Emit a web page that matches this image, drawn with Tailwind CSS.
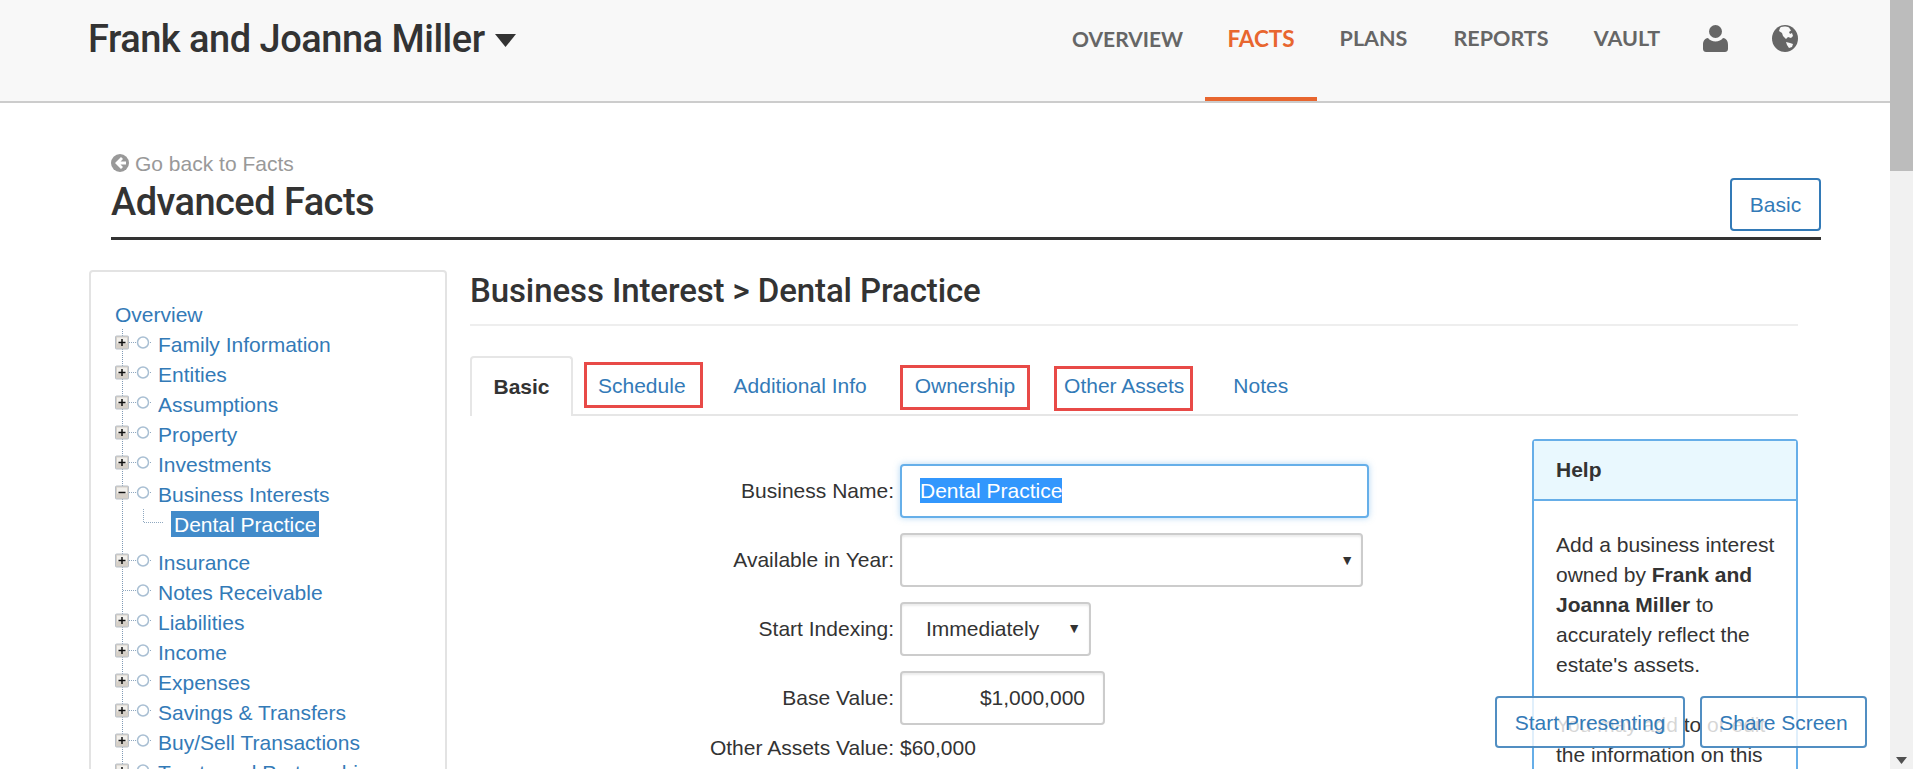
<!DOCTYPE html>
<html lang="en">

<head>
    <meta charset="UTF-8">
    <title>Advanced Facts</title>
    <script src="https://cdn.jsdelivr.net/npm/@tailwindcss/browser@4"></script>
</head>

<body class="h-[769px] overflow-hidden bg-white font-['Liberation_Sans',Arial,sans-serif] text-[21px] leading-[25px] text-[#333]">
    <svg class="hidden">
        <symbol id="tree-plus" viewBox="0 0 43 30">
            <path d="M7.5 0V30" stroke="#7f9ab5" stroke-dasharray="1 1" fill="none" />
            <path d="M14 13.5H21M35 13.5H37" stroke="#8fa8c0" stroke-dasharray="1 1" fill="none" />
            <rect x="0.5" y="7" width="13" height="13" rx="1" fill="#d6d0c8" stroke="#b9c0c8" />
            <rect x="2" y="8.5" width="10" height="6" fill="#f2f0ec" />
            <path d="M3.5 13.5H10.5M7 10V17" stroke="#111" stroke-width="1.5" />
            <circle cx="28" cy="13.500" r="5.500" fill="#fff" stroke="#a9bfd3" stroke-width="1.500" />
        </symbol>
        <symbol id="tree-minus" viewBox="0 0 43 30">
            <path d="M7.5 0V30" stroke="#7f9ab5" stroke-dasharray="1 1" fill="none" />
            <path d="M14 13.5H21M35 13.5H37" stroke="#8fa8c0" stroke-dasharray="1 1" fill="none" />
            <rect x="0.5" y="7" width="13" height="13" rx="1" fill="#d6d0c8" stroke="#b9c0c8" />
            <rect x="2" y="8.5" width="10" height="6" fill="#f2f0ec" />
            <path d="M3.5 13.5H10.5" stroke="#111" stroke-width="1.5" />
            <circle cx="28" cy="13.500" r="5.500" fill="#fff" stroke="#a9bfd3" stroke-width="1.500" />
        </symbol>
        <symbol id="tree-leaf" viewBox="0 0 43 30">
            <path d="M7.5 0V30" stroke="#7f9ab5" stroke-dasharray="1 1" fill="none" />
            <path d="M8 13.5H21M35 13.5H37" stroke="#8fa8c0" stroke-dasharray="1 1" fill="none" />
            <circle cx="28" cy="13.500" r="5.500" fill="#fff" stroke="#a9bfd3" stroke-width="1.500" />
        </symbol>
    </svg>

    <div class="flex h-[769px]">
        <div class="relative w-[1890px] overflow-hidden">
            <!-- top nav -->
            <header class="flex h-[103px] justify-between border-b-2 border-[#ccc] bg-[#f8f8f8] pl-[88px] pr-[92px]">
                <div class="flex h-[78px] items-center font-['Roboto',sans-serif] text-[38px] font-medium tracking-[-0.5px] text-[#333]">
                    Frank and Joanna Miller
                    <svg class="ml-[10px] mt-[2px] h-[13px] w-[21px]" viewBox="0 0 21 13"><path d="M0 0H21L10.500 13z" fill="#333" /></svg>
                </div>
                <nav class="flex font-['Lato',sans-serif] text-[21.5px] font-bold text-[#666]">
                    <a class="w-[133px] pr-[23px] pt-[26px] text-right text-[21px]">OVERVIEW</a>
                    <a class="h-[101px] w-[112px] border-b-4 border-[#e8662f] pt-[26px] text-center text-[22.5px] text-[#e8662f]">FACTS</a>
                    <a class="w-[113px] pt-[26px] text-center">PLANS</a>
                    <a class="w-[142px] pt-[26px] text-center">REPORTS</a>
                    <a class="w-[110px] pt-[26px] text-center">VAULT</a>
                    <svg class="ml-[21px] mt-[25px] h-[27px] w-[25px]" viewBox="0 0 25 27">
                        <ellipse cx="12.500" cy="6.500" rx="6.500" ry="6.500" fill="#666" />
                        <path d="M0 20c0-4 1.500-6.500 5-7 1.500 2 4.500 3.500 7.500 3.500s6-1.500 7.500-3.500c3.500.5 5 3 5 7v4c0 2-1.500 3-3 3H3c-1.500 0-3-1-3-3z" fill="#666" />
                    </svg>
                    <svg class="ml-[44px] mt-[25px] h-[27px] w-[26px]" viewBox="0 0 26 27">
                        <ellipse cx="13" cy="13.500" rx="13" ry="13.500" fill="#666" />
                        <path d="M9 2c3-1 6-.500 8 .500l2 3-2 1.500 1 2 2-1 1 3-2 2-3-1-2 2-3-3-1-3-3-2 1-3zM14 17l4 1 3 1-1 3-3 1-2-3z" fill="#f8f8f8" />
                    </svg>
                </nav>
            </header>

            <!-- page heading -->
            <div class="ml-[111px] mr-[69px] mt-[48px] flex items-end justify-between border-b-[3px] border-[#333]">
                <div class="pb-[12px]">
                    <a class="mb-[4px] flex h-[24px] items-center text-[#999]">
                        <svg class="mr-[6px] h-[18px] w-[18px] shrink-0" viewBox="0 0 18 18">
                            <circle cx="9" cy="9" r="9" fill="#999" />
                            <path d="M10 3 4 9l6 6 2-2-2.500-2.500H15v-3H9.500L12 5z" fill="#fff" />
                        </svg>
                        Go back to Facts
                    </a>
                    <h1 class="h-[46px] font-['Roboto',sans-serif] text-[38px] font-medium leading-[46px] tracking-[-0.55px]">Advanced Facts</h1>
                </div>
                <button class="mb-[6px] h-[53px] w-[91px] rounded-[4px] border-2 border-[#337ab7] text-[#337ab7]">Basic</button>
            </div>

            <div class="ml-[89px] mt-[31px] flex gap-[23px]">
                <!-- facts tree -->
                <aside class="-mt-[1px] h-[600px] w-[358px] shrink-0 rounded-[4px] border-2 border-[#e3e3e3] pl-[24px] pt-[27px] text-[#337ab7]">
                    <div class="flex h-[30px] items-center">Overview</div>
                    <div class="flex h-[30px] items-center"><svg class="h-[30px] w-[43px]"><use href="#tree-plus" /></svg>Family Information</div>
                    <div class="flex h-[30px] items-center"><svg class="h-[30px] w-[43px]"><use href="#tree-plus" /></svg>Entities</div>
                    <div class="flex h-[30px] items-center"><svg class="h-[30px] w-[43px]"><use href="#tree-plus" /></svg>Assumptions</div>
                    <div class="flex h-[30px] items-center"><svg class="h-[30px] w-[43px]"><use href="#tree-plus" /></svg>Property</div>
                    <div class="flex h-[30px] items-center"><svg class="h-[30px] w-[43px]"><use href="#tree-plus" /></svg>Investments</div>
                    <div class="flex h-[30px] items-center"><svg class="h-[30px] w-[43px]"><use href="#tree-minus" /></svg>Business Interests</div>
                    <div class="flex h-[38px] items-start">
                        <svg class="h-[38px] w-[56px] shrink-0" viewBox="0 0 56 38">
                            <path d="M7.500 0V38" stroke="#7f9ab5" stroke-dasharray="1 1" fill="none" />
                            <path d="M28.500 0V13.500H48" stroke="#8fa8c0" stroke-dasharray="1 1" fill="none" />
                        </svg>
                        <span class="mt-[2px] flex h-[26px] items-center bg-[#428bca] px-[3px] text-white">Dental Practice</span>
                    </div>
                    <div class="flex h-[30px] items-center"><svg class="h-[30px] w-[43px]"><use href="#tree-plus" /></svg>Insurance</div>
                    <div class="flex h-[30px] items-center"><svg class="h-[30px] w-[43px]"><use href="#tree-leaf" /></svg>Notes Receivable</div>
                    <div class="flex h-[30px] items-center"><svg class="h-[30px] w-[43px]"><use href="#tree-plus" /></svg>Liabilities</div>
                    <div class="flex h-[30px] items-center"><svg class="h-[30px] w-[43px]"><use href="#tree-plus" /></svg>Income</div>
                    <div class="flex h-[30px] items-center"><svg class="h-[30px] w-[43px]"><use href="#tree-plus" /></svg>Expenses</div>
                    <div class="flex h-[30px] items-center"><svg class="h-[30px] w-[43px]"><use href="#tree-plus" /></svg>Savings &amp; Transfers</div>
                    <div class="flex h-[30px] items-center"><svg class="h-[30px] w-[43px]"><use href="#tree-plus" /></svg>Buy/Sell Transactions</div>
                    <div class="flex h-[30px] items-center"><svg class="h-[30px] w-[43px]"><use href="#tree-plus" /></svg>Trusts and Partnerships</div>
                </aside>

                <main class="w-[1328px]">
                    <h2 class="h-[55px] border-b-2 border-[#eee] font-['Roboto',sans-serif] text-[33px] font-medium leading-[40px] tracking-[-0.1px]">Business Interest &gt; Dental Practice</h2>

                    <!-- tabs -->
                    <div class="mt-[30px] flex h-[60px] border-b-2 border-[#e6e6e6] text-[#337ab7]">
                        <a class="-mb-[2px] flex h-[60px] w-[103px] items-center justify-center rounded-t-[4px] border-2 border-b-0 border-[#e6e6e6] bg-white pb-[2px] font-bold text-[#333]">Basic</a>
                        <a class="relative ml-[25px] flex h-[59px] items-center">Schedule
                            <span class="absolute left-[-14px] top-[6px] h-[46px] w-[119px] border-[3px] border-[#e84a47]"></span>
                        </a>
                        <a class="ml-[48px] flex h-[59px] items-center">Additional Info</a>
                        <a class="relative ml-[48px] flex h-[59px] items-center">Ownership
                            <span class="absolute left-[-15px] top-[9px] h-[45px] w-[130px] border-[3px] border-[#e84a47]"></span>
                        </a>
                        <a class="relative ml-[49px] flex h-[59px] items-center">Other Assets
                            <span class="absolute left-[-10px] top-[10px] h-[45px] w-[139px] border-[3px] border-[#e84a47]"></span>
                        </a>
                        <a class="ml-[49px] flex h-[59px] items-center">Notes</a>
                    </div>

                    <div class="flex">
                        <!-- form -->
                        <form class="w-[1062px] pt-[48px]">
                            <div class="flex items-center gap-[6px]">
                                <label class="w-[424px] pb-[2px] text-right">Business Name:</label>
                                <div class="flex h-[54px] w-[469px] items-center rounded-[4px] border-2 border-[#66afe9] pb-[2px] pl-[18px] shadow-[0_0_6px_rgba(102,175,233,0.5)]">
                                    <span class="bg-[#3297fd] text-white">Dental Practice</span>
                                </div>
                            </div>
                            <div class="mt-[15px] flex items-center gap-[6px]">
                                <label class="w-[424px] pb-[2px] text-right">Available in Year:</label>
                                <div class="flex h-[54px] w-[463px] items-center justify-end rounded-[4px] border-2 border-[#ccc] pr-[7px] text-[14px] shadow-[inset_0_2px_2px_rgba(0,0,0,0.08)]">▼</div>
                            </div>
                            <div class="mt-[15px] flex items-center gap-[6px]">
                                <label class="w-[424px] pb-[2px] text-right">Start Indexing:</label>
                                <div class="flex h-[54px] w-[191px] items-center justify-between rounded-[4px] border-2 border-[#ccc] pb-[2px] pl-[24px] pr-[8px] shadow-[inset_0_2px_2px_rgba(0,0,0,0.08)]">Immediately<span class="text-[14px]">▼</span></div>
                            </div>
                            <div class="mt-[15px] flex items-center gap-[6px]">
                                <label class="w-[424px] pb-[2px] text-right">Base Value:</label>
                                <div class="flex h-[54px] w-[205px] items-center justify-end rounded-[4px] border-2 border-[#ccc] pb-[2px] pr-[18px] shadow-[inset_0_2px_2px_rgba(0,0,0,0.08)]">$1,000,000</div>
                            </div>
                            <div class="mt-[10px] flex items-center gap-[6px]">
                                <label class="w-[424px] text-right">Other Assets Value:</label>
                                <span>$60,000</span>
                            </div>
                        </form>

                        <!-- help -->
                        <section class="mt-[23px] h-[400px] w-[266px] rounded-t-[4px] border-2 border-[#66aee8] leading-[30px]">
                            <div class="flex h-[60px] items-center border-b-2 border-[#66aee8] bg-[#e9f8fe] pl-[22px] font-bold">Help</div>
                            <div class="whitespace-nowrap pl-[22px] pt-[29px]">
                                <p>Add a business interest<br>owned by <b>Frank and</b><br><b>Joanna Miller</b> to<br>accurately reflect the<br>estate's assets.</p>
                                <p class="mt-[30px]">You may add to or edit<br>the information on this</p>
                            </div>
                        </section>
                    </div>
                </main>
            </div>

            <!-- presenter buttons float over the page -->
            <div class="absolute left-[1495px] top-[696px] flex gap-[15px] text-[#337ab7]">
                <button class="h-[52px] w-[190px] rounded-[4px] border-2 border-[#337ab7]/85 bg-white/80">Start Presenting</button>
                <button class="h-[52px] w-[167px] rounded-[4px] border-2 border-[#337ab7]/85 bg-white/80">Share Screen</button>
            </div>
        </div>

        <!-- scrollbar -->
        <div class="relative w-[23px] bg-[#f1f1f1]">
            <div class="h-[171px] bg-[#bcbcbc]"></div>
            <svg class="absolute bottom-[5px] left-[6px] h-[7px] w-[11px]" viewBox="0 0 11 7"><path d="M0 0H11L5.500 7z" fill="#505050" /></svg>
        </div>
    </div>
</body>

</html>
